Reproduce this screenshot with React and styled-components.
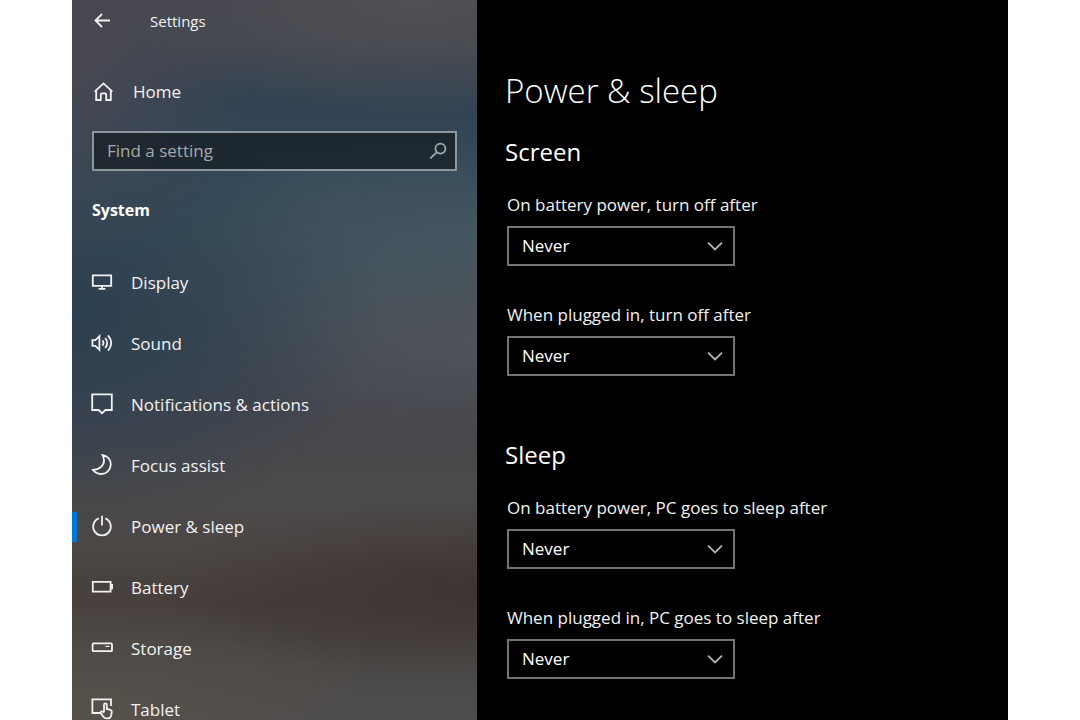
import React, { useState } from "react";
import styled, { createGlobalStyle } from "styled-components";

/*
  <Page>
    <Window>
      <Sidebar>
        <TitleBar />
        <HomeLink />
        <SearchBox />
        <Category />
        <NavList />
      </Sidebar>
      <Content>
        <PageTitle />
        <Section />
      </Content>
    </Window>
  </Page>
 */

const GlobalStyle = createGlobalStyle`
  * {
    box-sizing: border-box;
  }

  body {
    margin: 0;
    background-color: white;
    font-family: "Open Sans", "Noto Sans", sans-serif;
    font-size: 17px;
    line-height: 24px;
    color: #f2f2f2;
  }
`;

const Page = styled.div`
  display: flex;
  height: 100vh;
  padding: 0 72px;
`;

const Window = styled.div`
  display: grid;
  grid-template-columns: 405fr 531fr;
  width: 100%;
  height: 100%;
  background-color: black;
`;

const Sidebar = styled.aside`
  display: flex;
  flex-direction: column;
  min-height: 0;
  overflow-y: auto;
  scrollbar-width: none;
  background:
    radial-gradient(ellipse 80% 16% at 85% 0%, #505156 0%, rgba(80, 81, 86, 0) 100%),
    radial-gradient(ellipse 45% 28% at 0% 8%, #484852 0%, rgba(72, 72, 82, 0) 100%),
    radial-gradient(ellipse 80% 12% at 100% 82%, #3e3431 0%, rgba(62, 52, 49, 0) 100%),
    radial-gradient(ellipse 75% 30% at 0% 44%, #2c3f50 0%, rgba(44, 63, 80, 0) 100%),
    radial-gradient(ellipse 70% 14% at 100% 47%, #50545a 0%, rgba(80, 84, 90, 0) 100%),
    radial-gradient(ellipse 90% 16% at 100% 35%, #455760 0%, rgba(69, 87, 96, 0) 100%),
    radial-gradient(ellipse 80% 18% at 0% 100%, #57514a 0%, rgba(87, 81, 74, 0) 100%),
    linear-gradient(
      180deg,
      #42434b 0%,
      #3f444c 6%,
      #324353 14%,
      #364959 24%,
      #3b4d59 34%,
      #414a52 44%,
      #45464d 56%,
      #4b494a 68%,
      #4c4745 76%,
      #463f3b 84%,
      #4a4745 92%,
      #4e4d4e 100%
    );
`;

const TitleBar = styled.header`
  display: flex;
  flex-shrink: 0;
  align-items: center;
  gap: 36px;
  height: 42px;
  padding: 0 20px;
  font-size: 15px;
`;

const BackButton = styled.button`
  display: flex;
  padding: 0;
  border: none;
  background: none;
  color: inherit;
`;

const Icon = styled.svg`
  flex-shrink: 0;
  width: ${(props) => props.$size || 22}px;
  height: ${(props) => props.$size || 22}px;
  fill: none;
  stroke: currentColor;
  stroke-width: 1.8;
`;

const HomeLink = styled.a`
  display: flex;
  flex-shrink: 0;
  align-items: center;
  gap: 19px;
  height: 40px;
  margin-top: 30px;
  padding: 0 20px;
  color: inherit;
  text-decoration: none;
`;

const SearchBox = styled.label`
  display: flex;
  flex-shrink: 0;
  align-items: center;
  height: 40px;
  margin: 19px 20px 0 20px;
  padding: 0 7px 0 13px;
  border: 2px solid #8d969d;
  background-color: rgba(10, 14, 18, 0.55);
  color: #a4a9ad;
`;

const SearchInput = styled.input`
  flex: 1;
  min-width: 0;
  padding: 0;
  border: none;
  outline: none;
  background: none;
  color: white;
  font: inherit;

  &::placeholder {
    color: #a4a9ad;
    opacity: 1;
  }
`;

const Category = styled.h2`
  margin: 27px 20px 0 20px;
  font-size: 16px;
  font-weight: 700;
  line-height: 24px;
  color: white;
`;

const NavList = styled.ul`
  margin: 30px 0 0 0;
  padding: 0;
  line-height: 20px;
  list-style: none;
`;

const NavLink = styled.a`
  display: flex;
  align-items: center;
  height: 61px;
  color: inherit;
  text-decoration: none;

  &::before {
    content: "";
    width: 5px;
    height: 30px;
    margin-right: 14px;
    background-color: ${(props) => (props.$active ? "#0078d7" : "transparent")};
  }

  svg {
    margin: 0 18px 2px 0;
  }
`;

const Content = styled.main`
  display: flex;
  flex-direction: column;
  min-height: 0;
  padding: 67px 28px 0 28px;
  overflow-y: auto;
  scrollbar-width: none;
`;

const PageTitle = styled.h1`
  margin: 0;
  font-size: 33px;
  font-weight: 300;
  line-height: 48px;
  color: white;
`;

const Section = styled.section`
  margin-top: 21px;

  & + & {
    margin-top: 63px;
  }
`;

const SectionTitle = styled.h2`
  margin: 0 0 25px 0;
  font-size: 24px;
  font-weight: 400;
  line-height: 32px;
  color: white;
`;

const FieldList = styled.div`
  display: flex;
  flex-direction: column;
  gap: 37px;
`;

const Field = styled.div`
  display: flex;
  flex-direction: column;
  align-items: flex-start;
  gap: 9px;
  padding-left: 2px;
`;

const FieldLabel = styled.label`
  font-size: 17px;
`;

const SelectWrapper = styled.div`
  display: grid;
  align-items: center;
  width: 228px;
  max-width: 100%;

  select,
  svg {
    grid-area: 1 / 1;
  }

  svg {
    justify-self: end;
    margin-right: 11px;
    color: #b4b4b4;
    pointer-events: none;
  }
`;

const Select = styled.select`
  width: 100%;
  height: 40px;
  padding: 0 40px 0 13px;
  border: 2px solid #747474;
  border-radius: 0;
  appearance: none;
  background-color: black;
  color: white;
  font: inherit;
`;

const BackIcon = () => (
  <Icon viewBox="0 0 22 22">
    <path d="M18 10.5H3.5M10 4L3.5 10.5L10 17" />
  </Icon>
);

const HomeIcon = () => (
  <Icon viewBox="0 0 22 22">
    <path d="M2.6 10.6L11.5 2.4L20.4 10.6M4.2 9.4V19H8.8V13.6Q8.8 12.4 10 12.4H13Q14.2 12.4 14.2 13.6V19H18.8V9.4" />
  </Icon>
);

const SearchIcon = () => (
  <Icon viewBox="0 0 20 20" $size={20}>
    <circle cx="12.4" cy="7.6" r="5" />
    <path d="M8.8 11.2L2.4 17.4" />
  </Icon>
);

const ChevronIcon = () => (
  <Icon viewBox="0 0 18 18" $size={18}>
    <path d="M2 5.6L9 12.4L16 5.6" />
  </Icon>
);

const DisplayIcon = () => (
  <Icon viewBox="0 0 22 22">
    <path d="M1.8 4.4H20.2V14.8H1.8ZM11 14.8V17M7.6 17.8H14.4" />
  </Icon>
);

const SoundIcon = () => (
  <Icon viewBox="0 0 22 22">
    <path d="M1.4 8.2H4.4L8.4 4.2V17.8L4.4 13.8H1.4Z" />
    <path d="M11.4 8.4Q13.6 11 11.4 13.6M14.2 6Q18.2 11 14.2 16M17 3.4Q23.4 11 17 18.6" />
  </Icon>
);

const NotificationIcon = () => (
  <Icon viewBox="0 0 22 22">
    <path d="M1.2 1.4H20.8V17H14.4L11 20.2L7.6 17H1.2Z" />
  </Icon>
);

const MoonIcon = () => (
  <Icon viewBox="0 0 22 22">
    <path d="M11.6 1.2C17 2 20 6 19.8 10.6C19.4 16.4 15 20.2 9.8 20C6.4 19.8 3.8 18.4 2 16C8.6 15.6 13 11.6 13 6.6C13 4.6 12.6 2.8 11.6 1.2Z" />
  </Icon>
);

const PowerIcon = () => (
  <Icon viewBox="0 0 22 22">
    <path d="M7.8 3.4A8.8 8.8 0 1 0 14.2 3.4M11 0.8V10.4" />
  </Icon>
);

const BatteryIcon = () => (
  <Icon viewBox="0 0 22 22">
    <path d="M1.8 5.8H19.6V15.6H1.8ZM20 9V12.4H21.2V9Z" />
  </Icon>
);

const StorageIcon = () => (
  <Icon viewBox="0 0 22 22">
    <rect x="1.6" y="6.4" width="19.4" height="7.8" rx="1" />
    <path d="M14.4 9.4H18.4" strokeWidth="1.2" />
  </Icon>
);

const TabletIcon = () => (
  <Icon viewBox="0 0 22 22">
    <path d="M9 15H1.4V1.4H20V8" />
    <path d="M13 14.6V6.8Q13 5.4 14.4 5.4Q15.8 5.4 15.8 6.8V11L19.4 11.8Q21 12.2 20.8 14L20.2 17.4Q19.4 20.4 16.8 20.4H15.4Q13.6 20.4 12.6 19L9.8 15.2Q9.2 14 10.2 13.4Q11.2 13 13 14.6" />
  </Icon>
);

const navItems = [
  { name: "Display", icon: DisplayIcon },
  { name: "Sound", icon: SoundIcon },
  { name: "Notifications & actions", icon: NotificationIcon },
  { name: "Focus assist", icon: MoonIcon },
  { name: "Power & sleep", icon: PowerIcon },
  { name: "Battery", icon: BatteryIcon },
  { name: "Storage", icon: StorageIcon },
  { name: "Tablet", icon: TabletIcon },
];

const sections = [
  {
    title: "Screen",
    fields: [
      { id: "screen-battery", label: "On battery power, turn off after" },
      { id: "screen-plugged", label: "When plugged in, turn off after" },
    ],
  },
  {
    title: "Sleep",
    fields: [
      { id: "sleep-battery", label: "On battery power, PC goes to sleep after" },
      { id: "sleep-plugged", label: "When plugged in, PC goes to sleep after" },
    ],
  },
];

const TimeoutField = ({ id, label }) => (
  <Field>
    <FieldLabel htmlFor={id}>{label}</FieldLabel>
    <SelectWrapper>
      <Select id={id} defaultValue="Never">
        <option>Never</option>
      </Select>
      <ChevronIcon />
    </SelectWrapper>
  </Field>
);

export default function App() {
  const [active, setActive] = useState("Power & sleep");

  return (
    <Page>
      <GlobalStyle />
      <Window>
        <Sidebar>
          <TitleBar>
            <BackButton type="button" aria-label="Back">
              <BackIcon />
            </BackButton>
            Settings
          </TitleBar>
          <HomeLink href="#home">
            <HomeIcon />
            Home
          </HomeLink>
          <SearchBox>
            <SearchInput
              type="text"
              placeholder="Find a setting"
              aria-label="Find a setting"
            />
            <SearchIcon />
          </SearchBox>
          <Category>System</Category>
          <nav>
            <NavList>
              {navItems.map(({ name, icon: ItemIcon }) => (
                <li key={name}>
                  <NavLink
                    href="#system"
                    $active={name === active}
                    onClick={() => setActive(name)}
                  >
                    <ItemIcon />
                    {name}
                  </NavLink>
                </li>
              ))}
            </NavList>
          </nav>
        </Sidebar>
        <Content>
          <PageTitle>Power & sleep</PageTitle>
          {sections.map((section) => (
            <Section key={section.title}>
              <SectionTitle>{section.title}</SectionTitle>
              <FieldList>
                {section.fields.map((field) => (
                  <TimeoutField key={field.id} {...field} />
                ))}
              </FieldList>
            </Section>
          ))}
        </Content>
      </Window>
    </Page>
  );
}
